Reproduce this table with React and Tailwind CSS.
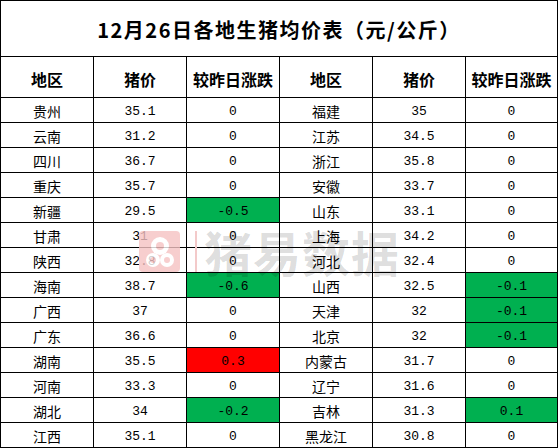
import React from "react";

const left = [
  ["贵州", "35.1", "0", ""],
  ["云南", "31.2", "0", ""],
  ["四川", "36.7", "0", ""],
  ["重庆", "35.7", "0", ""],
  ["新疆", "29.5", "-0.5", "g"],
  ["甘肃", "31", "0", ""],
  ["陕西", "32.8", "0", ""],
  ["海南", "38.7", "-0.6", "g"],
  ["广西", "37", "0", ""],
  ["广东", "36.6", "0", ""],
  ["湖南", "35.5", "0.3", "r"],
  ["河南", "33.3", "0", ""],
  ["湖北", "34", "-0.2", "g"],
  ["江西", "35.1", "0", ""],
];
const right = [
  ["福建", "35", "0", ""],
  ["江苏", "34.5", "0", ""],
  ["浙江", "35.8", "0", ""],
  ["安徽", "33.7", "0", ""],
  ["山东", "33.1", "0", ""],
  ["上海", "34.2", "0", ""],
  ["河北", "32.4", "0", ""],
  ["山西", "32.5", "-0.1", "g"],
  ["天津", "32", "-0.1", "g"],
  ["北京", "32", "-0.1", "g"],
  ["内蒙古", "31.7", "0", ""],
  ["辽宁", "31.6", "0", ""],
  ["吉林", "31.3", "0.1", "g"],
  ["黑龙江", "30.8", "0", ""],
];

const cjk = { fontFamily: '"Noto Sans CJK SC", sans-serif' };
const mono = { fontFamily: '"Liberation Mono", "Noto Sans CJK SC", monospace' };

function Cell({ children, kind, bg }) {
  const bgc = bg === "g" ? "bg-[#00b050]" : bg === "r" ? "bg-[#ff0000]" : "bg-white";
  return (
    <div
      className={`h-[25px] border-r border-b border-black flex items-center justify-center pt-[2px] ${bgc} ${
        kind === "num" ? "text-[13px]" : "text-[14px]"
      } text-black leading-none`}
      style={kind === "num" ? mono : cjk}
    >
      {children}
    </div>
  );
}

function Head({ children }) {
  return (
    <div
      className="h-[41px] border-r border-b border-black flex items-center justify-center pt-[4px] text-[16px] font-bold text-black leading-none"
      style={cjk}
    >
      {children}
    </div>
  );
}

export default function App() {
  return (
    <div className="bg-white w-[559px] h-[448px] overflow-hidden">
      <div className="relative w-[558px] border-l border-t border-black">
        <div
          className="h-[56px] border-r border-b border-black flex items-center justify-center pt-[3px] text-[20px] font-semibold tracking-[1.5px] text-black leading-none"
          style={cjk}
        >
          12月26日各地生猪均价表（元/公斤）
        </div>
        <div className="grid grid-cols-[93px_93px_93px_93px_93px_92px]">
          {["地区", "猪价", "较昨日涨跌", "地区", "猪价", "较昨日涨跌"].map((h, i) => (
            <Head key={i}>{h}</Head>
          ))}
          {left.map((l, i) => {
            const r = right[i];
            return (
              <React.Fragment key={i}>
                <Cell>{l[0]}</Cell>
                <Cell kind="num">{l[1]}</Cell>
                <Cell kind="num" bg={l[3]}>{l[2]}</Cell>
                <Cell>{r[0]}</Cell>
                <Cell kind="num">{r[1]}</Cell>
                <Cell kind="num" bg={r[3]}>{r[2]}</Cell>
              </React.Fragment>
            );
          })}
        </div>

        {/* watermark */}
        <div className="absolute left-[138px] top-[226px] flex items-center pointer-events-none">
          <div className="w-[41px] h-[41px] rounded-[4px] bg-[#f6c3c3] opacity-80">
            <svg width="41" height="41" viewBox="0 0 41 41">
              <circle cx="21" cy="15" r="9" fill="#fff" />
              <circle cx="21" cy="15" r="4" fill="#f6c3c3" />
              <circle cx="14" cy="29" r="7" fill="#fff" />
              <circle cx="14" cy="29" r="3" fill="#f6c3c3" />
              <circle cx="28" cy="29" r="7" fill="#fff" />
              <circle cx="28" cy="29" r="3" fill="#f6c3c3" />
            </svg>
          </div>
          <div className="ml-[15px] w-[2px] h-[41px] bg-[#f3caca]" />
          <div
            className="ml-[7px] text-[48px] font-bold leading-none text-black/15 tracking-[1px]"
            style={cjk}
          >
            猪易数据
          </div>
        </div>
      </div>
    </div>
  );
}
